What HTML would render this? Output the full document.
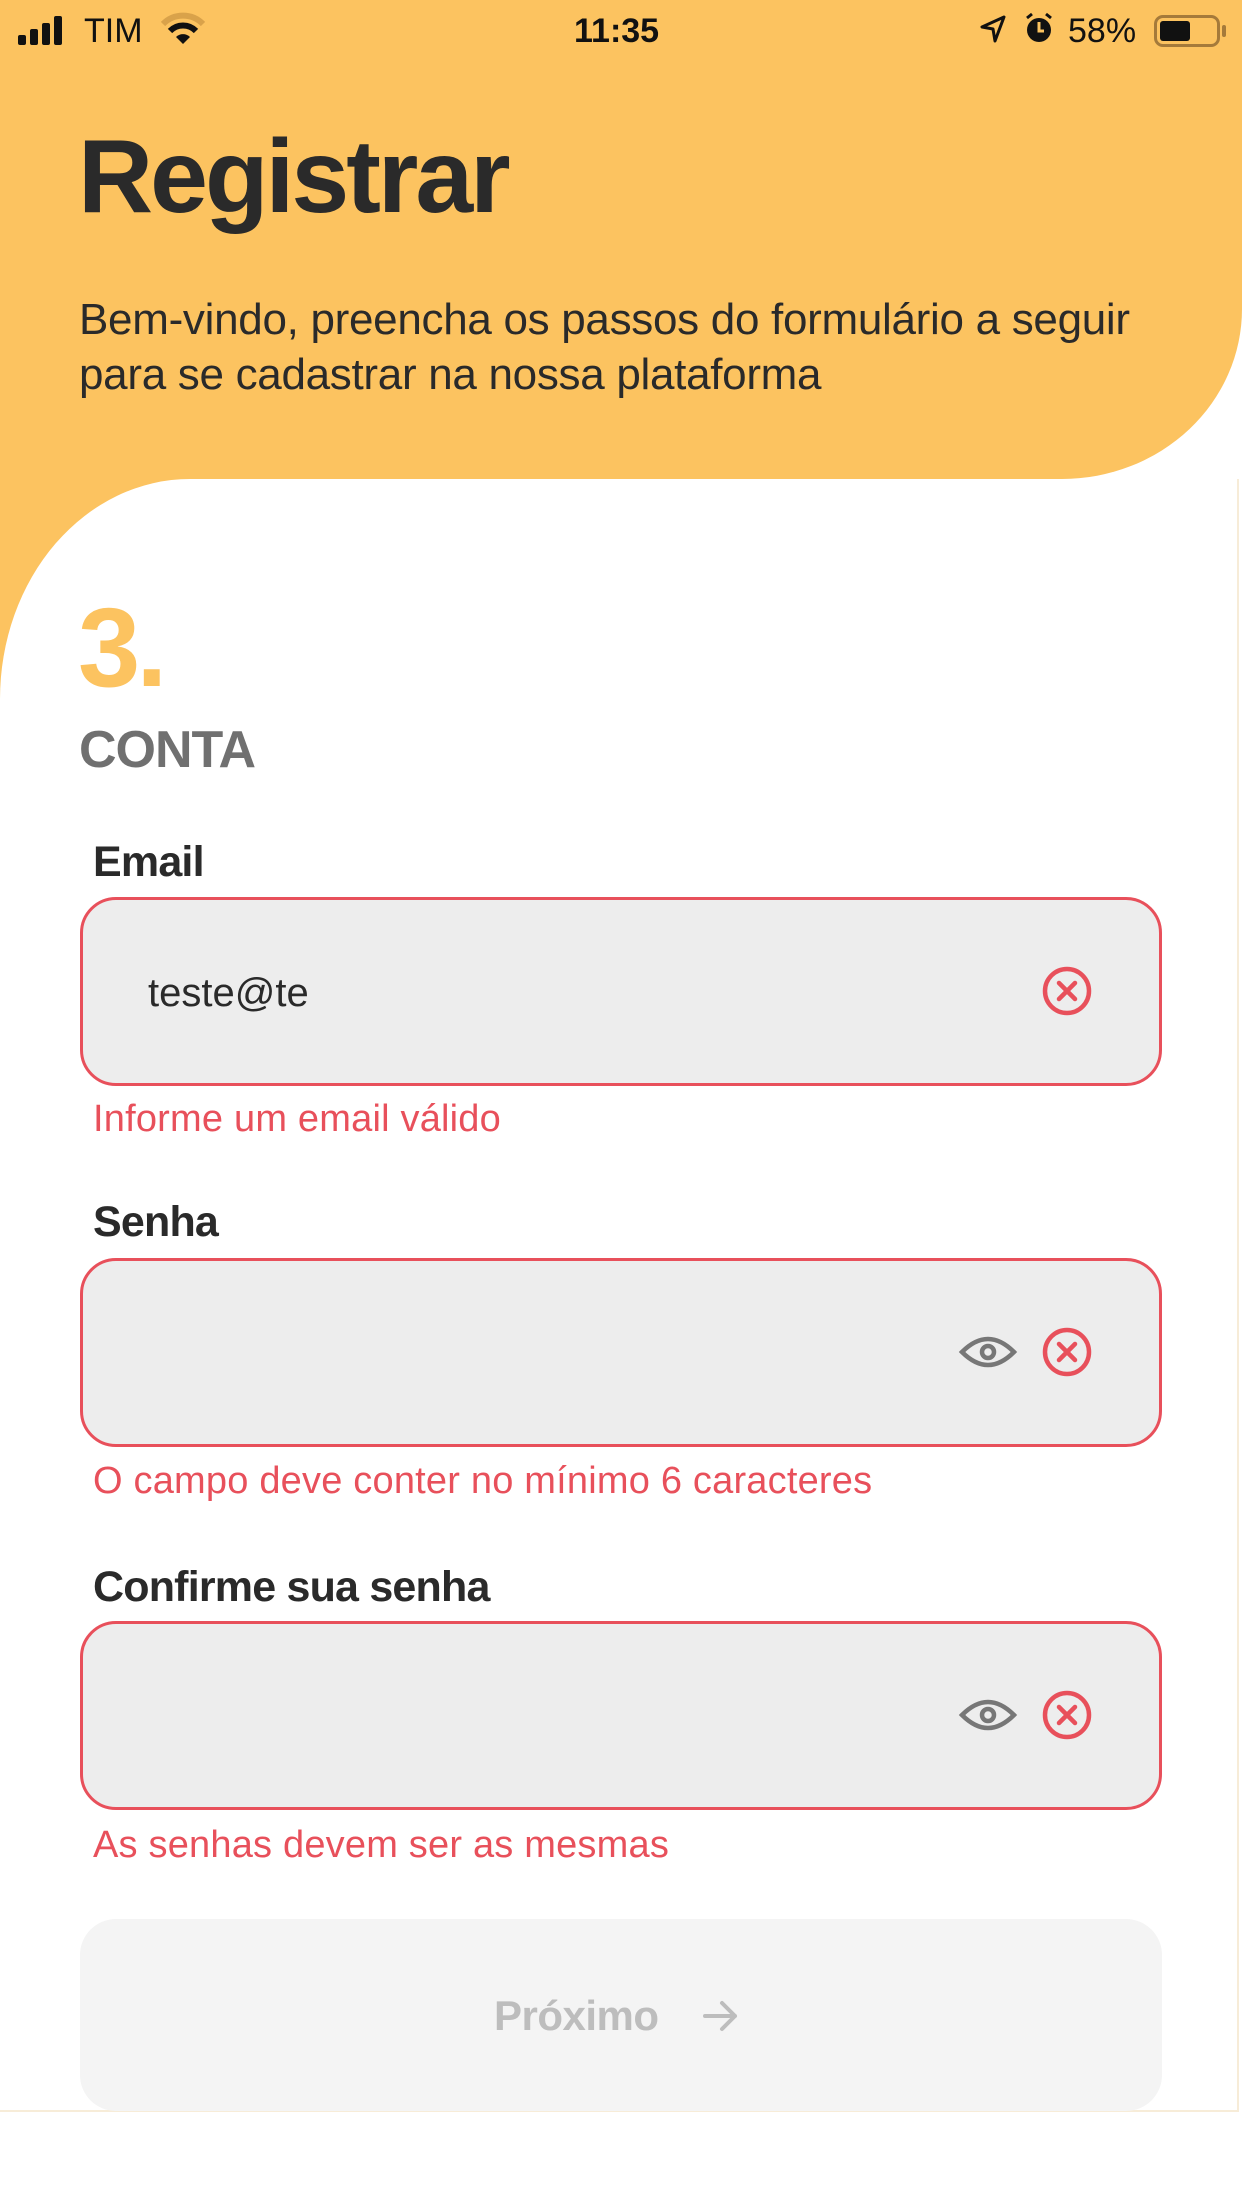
<!DOCTYPE html>
<html><head><meta charset="utf-8"><style>
*{margin:0;padding:0;box-sizing:border-box}
body{width:1242px;height:2208px;background:#fff;position:relative;overflow:hidden;font-family:"Liberation Sans",sans-serif}
.a{position:absolute;white-space:nowrap}
.lbl{left:93px;font-size:43px;font-weight:bold;color:#2a2a2a;letter-spacing:-0.8px;line-height:60px}
.box{left:80px;width:1082px;height:189px;background:#ededed;border:3px solid #e8505b;border-radius:36px}
.err{left:93px;font-size:38px;color:#e8505b;letter-spacing:0.2px;line-height:50px}
</style></head><body>
<div class="a" style="left:0;top:479px;width:300px;height:260px;background:#fcc360"></div>
<div class="a" style="left:0;top:0;width:1242px;height:479px;background:#fcc360;border-bottom-right-radius:180px 170px"></div>
<div class="a" style="left:0;top:479px;width:1239px;height:1633px;background:#fff;border-top-left-radius:190px 220px;border-right:2px solid #f7ecd8;border-bottom:2px solid #f7ecd8"></div>

<!-- status bar -->
<svg class="a" style="left:18px;top:16px" width="56" height="30"><rect x="0" y="19" width="8" height="10" rx="2" fill="#111"/><rect x="12" y="13" width="8" height="16" rx="2" fill="#111"/><rect x="24" y="7" width="8" height="22" rx="2" fill="#111"/><rect x="36" y="0" width="8" height="29" rx="2" fill="#111"/></svg>
<div class="a" style="left:84px;top:10px;font-size:34px;color:#111;line-height:42px">TIM</div>
<svg class="a" style="left:160px;top:12px" width="46" height="36" viewBox="0 0 46 36"><path d="M3 12 A28 28 0 0 1 43 12" stroke="#d9a24a" stroke-width="6" fill="none"/><path d="M10 19 A18 18 0 0 1 36 19" stroke="#111" stroke-width="6" fill="none"/><path d="M23 32 L16 25 A10 10 0 0 1 30 25 Z" fill="#111"/></svg>
<div class="a" style="left:574px;top:10px;font-size:34px;font-weight:bold;color:#111;line-height:42px">11:35</div>
<svg class="a" style="left:978px;top:14px" width="30" height="30" viewBox="0 0 30 30"><path d="M26 3 L4 13 L15 15 L17 27 Z" stroke="#111" stroke-width="3" fill="none" stroke-linejoin="round"/></svg>
<svg class="a" style="left:1024px;top:12px" width="30" height="34" viewBox="0 0 30 34"><circle cx="15" cy="18" r="12" fill="#111"/><path d="M15 10 V19 H20" stroke="#fcc360" stroke-width="3" fill="none"/><path d="M3 6 L8 2 M27 6 L22 2" stroke="#111" stroke-width="3"/></svg>
<div class="a" style="left:1068px;top:10px;font-size:34px;color:#111;line-height:42px">58%</div>
<div class="a" style="left:1154px;top:15px;width:66px;height:32px;border:3px solid #a57a3a;border-radius:9px"><div style="position:absolute;left:3px;top:3px;width:30px;height:20px;background:#111;border-radius:3px"></div></div>
<div class="a" style="left:1222px;top:25px;width:4px;height:12px;background:#a57a3a;border-radius:2px"></div>

<div class="a" style="left:78px;top:112px;font-size:104px;font-weight:bold;color:#2a2a2a;letter-spacing:-3px;line-height:130px">Registrar</div>
<div class="a" style="left:79px;top:292px;font-size:44px;color:#2a2a2a;letter-spacing:-0.3px;line-height:55px">Bem-vindo, preencha os passos do formulário a seguir<br>para se cadastrar na nossa plataforma</div>

<div class="a" style="left:78px;top:588px;font-size:112px;font-weight:bold;color:#fcc360;line-height:120px;letter-spacing:-4px">3.</div>
<div class="a" style="left:79px;top:720px;font-size:52px;font-weight:bold;color:#707070;line-height:60px;letter-spacing:-1px">CONTA</div>

<div class="a lbl" style="top:832px">Email</div>
<div class="a box" style="top:897px"></div>
<div class="a" style="left:148px;top:968px;font-size:40px;color:#2a2a2a;line-height:50px">teste@te</div>
<div class="a err" style="top:1094px">Informe um email válido</div>

<div class="a lbl" style="top:1192px">Senha</div>
<div class="a box" style="top:1258px"></div>
<div class="a err" style="top:1456px">O campo deve conter no mínimo 6 caracteres</div>

<div class="a lbl" style="top:1557px">Confirme sua senha</div>
<div class="a box" style="top:1621px"></div>
<div class="a err" style="top:1820px">As senhas devem ser as mesmas</div>

<svg class="a" style="left:0;top:0" width="1242" height="2208">
<g fill="none" stroke="#e8505b" stroke-width="4.5" stroke-linecap="round">
<circle cx="1067" cy="991" r="22"/><path d="M1059 983 L1075 999 M1075 983 L1059 999"/>
<circle cx="1067" cy="1352" r="22"/><path d="M1059 1344 L1075 1360 M1075 1344 L1059 1360"/>
<circle cx="1067" cy="1715" r="22"/><path d="M1059 1707 L1075 1723 M1075 1707 L1059 1723"/>
</g>
<g fill="none" stroke="#777" stroke-width="4.5">
<path d="M962 1352 Q988 1326 1014 1352 Q988 1378 962 1352 Z"/><circle cx="988" cy="1352" r="6"/>
<path d="M962 1715 Q988 1689 1014 1715 Q988 1741 962 1715 Z"/><circle cx="988" cy="1715" r="6"/>
</g>
</svg>

<div class="a" style="left:80px;top:1919px;width:1082px;height:192px;background:#f4f4f4;border-radius:36px"></div>
<div class="a" style="left:494px;top:1990px;font-size:42px;font-weight:bold;color:#bdbdbd;line-height:52px;letter-spacing:-0.5px">Próximo</div>
<svg class="a" style="left:702px;top:1998px" width="38" height="36" viewBox="0 0 38 36"><path d="M3 18 H33 M20 5 L33 18 L20 31" stroke="#bdbdbd" stroke-width="4" fill="none" stroke-linecap="round" stroke-linejoin="round"/></svg>
</body></html>
